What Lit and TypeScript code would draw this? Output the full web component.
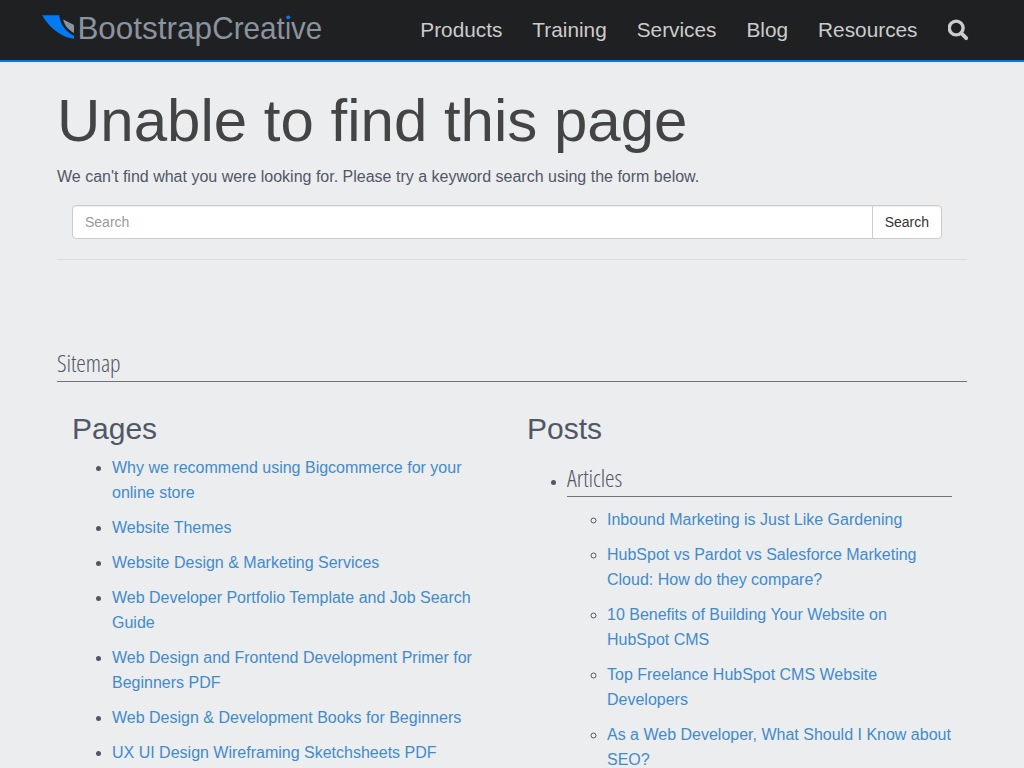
import { LitElement, html, css } from "lit";
import { customElement } from "lit/decorators.js";

const NAV = ["Products", "Training", "Services", "Blog", "Resources"];

const PAGES = [
  "Why we recommend using Bigcommerce for your online store",
  "Website Themes",
  "Website Design & Marketing Services",
  "Web Developer Portfolio Template and Job Search Guide",
  "Web Design and Frontend Development Primer for Beginners PDF",
  "Web Design & Development Books for Beginners",
  "UX UI Design Wireframing Sketchsheets PDF",
];

const ARTICLES = [
  "Inbound Marketing is Just Like Gardening",
  "HubSpot vs Pardot vs Salesforce Marketing Cloud: How do they compare?",
  "10 Benefits of Building Your Website on HubSpot CMS",
  "Top Freelance HubSpot CMS Website Developers",
  "As a Web Developer, What Should I Know about SEO?",
];

@customElement("site-header")
export class SiteHeader extends LitElement {
  static styles = css`
    :host {
      display: block;
    }
    .bar {
      box-sizing: border-box;
      height: 62px;
      padding: 0 41.5px 0 42px;
      display: flex;
      justify-content: space-between;
      align-items: flex-start;
      background: #1f2022;
      border-bottom: 2px solid #0078f0;
    }
    .logo {
      display: block;
      margin-top: 10px;
    }
    .word {
      font-family: "Liberation Sans", Arial, sans-serif;
      font-size: 32px;
      fill: #8b939e;
    }
    .dotted {
      fill: url(#dot);
    }
    .nav {
      display: flex;
      font-size: 20.8px;
      line-height: 60px;
    }
    .item {
      padding: 0 15px;
      color: #ccc;
      text-decoration: none;
    }
    .glass {
      display: flex;
      align-items: center;
      height: 60px;
      padding-right: 14px;
    }
  `;

  render() {
    return html`<header class="bar">
      <svg class="logo" width="282" height="40" viewBox="42 10 282 40">
        <linearGradient id="dot" gradientUnits="userSpaceOnUse" x1="0" y1="10" x2="0" y2="50">
          <stop offset="0.25" stop-color="#007bf5" />
          <stop offset="0.25" stop-color="#8b939e" />
        </linearGradient>
        <path
          fill="#007bf5"
          d="M42 15.2H59.3C59.8 23.5 65 31 74 35.8V38.8C62 37.6 50 28.5 42 15.2Z"
        />
        <path
          fill="#8b939e"
          d="M63.2 19.6L74 25V33C68 29.8 64.4 25.4 63.2 19.6Z"
        />
        <text class="word" y="38.9"><tspan x="77.4" textLength="134.6" lengthAdjust="spacingAndGlyphs">Bootstrap</tspan><tspan x="212.2" textLength="72.6" lengthAdjust="spacingAndGlyphs">Creat</tspan><tspan class="dotted" x="285.3" textLength="5.7" lengthAdjust="spacingAndGlyphs">i</tspan><tspan x="291.1" textLength="31.1" lengthAdjust="spacingAndGlyphs">ve</tspan></text>
        <circle cx="288.3" cy="17.3" r="1.9" fill="#007bf5" />
      </svg>
      <nav class="nav">
        ${NAV.map((n) => html`<a class="item">${n}</a>`)}
        <a class="item glass">
          <svg width="21" height="22" viewBox="0 0 21 22">
            <circle cx="8.2" cy="9" r="6.9" fill="none" stroke="#ccc" stroke-width="3.4" />
            <path d="M13.2 14.2L18.2 19.2" stroke="#ccc" stroke-width="3.8" stroke-linecap="round" />
          </svg>
        </a>
      </nav>
    </header>`;
  }
}

@customElement("app-root")
export class AppRoot extends LitElement {
  static styles = css`
    :host {
      display: block;
      height: 768px;
      overflow: hidden;
      background: #ecedef;
      color: #505866;
      font-family: "Liberation Sans", Arial, sans-serif;
      font-size: 16px;
      line-height: 25px;
    }
    .wrap {
      width: 910px;
      margin: 0 auto;
    }
    .title {
      margin: 26px 0 10px;
      font-size: 60px;
      line-height: 66px;
      font-weight: 400;
      color: #444;
    }
    .lead {
      margin: 0 0 16px;
    }
    .search {
      display: flex;
      width: 870px;
      height: 34px;
      box-sizing: border-box;
      margin-left: 15px;
      font-size: 14px;
      line-height: 32px;
      background: #fff;
      border: 1px solid #ccc;
      border-radius: 4px;
      box-shadow: inset 0 1px 1px rgba(0, 0, 0, 0.075);
    }
    .field {
      flex: 1;
      padding-left: 12px;
      color: #999;
    }
    .go {
      padding: 0 12px;
      border-left: 1px solid #ccc;
      color: #333;
    }
    .rule {
      margin-top: 20px;
      height: 1px;
      background: #dcdddf;
    }
    .cond {
      margin: 0;
      font-family: "Open Sans", sans-serif;
      font-stretch: 75%;
      font-weight: 300;
      font-size: 24px;
      line-height: 26px;
      padding-bottom: 5px;
      letter-spacing: -0.08px;
      border-bottom: 1px solid #6f7278;
    }
    .sitemap {
      margin-top: 90px;
    }
    .cols {
      display: grid;
      grid-template-columns: 455px 455px;
    }
    .col {
      padding: 0 15px;
    }
    .head {
      margin: 30px 0 10px;
      font-size: 30px;
      line-height: 33px;
      font-weight: 400;
    }
    .list {
      margin: 0;
      padding-left: 40px;
    }
    .row {
      margin-bottom: 10px;
    }
    .articles {
      margin-bottom: 10px;
    }
    .group {
      padding-top: 10px;
    }
    .link {
      color: #428bca;
    }
  `;

  private items(list: string[]) {
    return list.map((t) => html`<li class="row"><a class="link">${t}</a></li>`);
  }

  render() {
    return html`
      <site-header></site-header>
      <main class="wrap">
        <h1 class="title">Unable to find this page</h1>
        <p class="lead">
          We can't find what you were looking for. Please try a keyword search using the form below.
        </p>
        <div class="search">
          <span class="field">Search</span>
          <span class="go">Search</span>
        </div>
        <div class="rule"></div>
        <h3 class="cond sitemap">Sitemap</h3>
        <div class="cols">
          <section class="col">
            <h2 class="head">Pages</h2>
            <ul class="list">
              ${this.items(PAGES)}
            </ul>
          </section>
          <section class="col">
            <h2 class="head">Posts</h2>
            <ul class="list group">
              <li>
                <h3 class="cond articles">Articles</h3>
                <ul class="list">
                  ${this.items(ARTICLES)}
                </ul>
              </li>
            </ul>
          </section>
        </div>
      </main>
    `;
  }
}
